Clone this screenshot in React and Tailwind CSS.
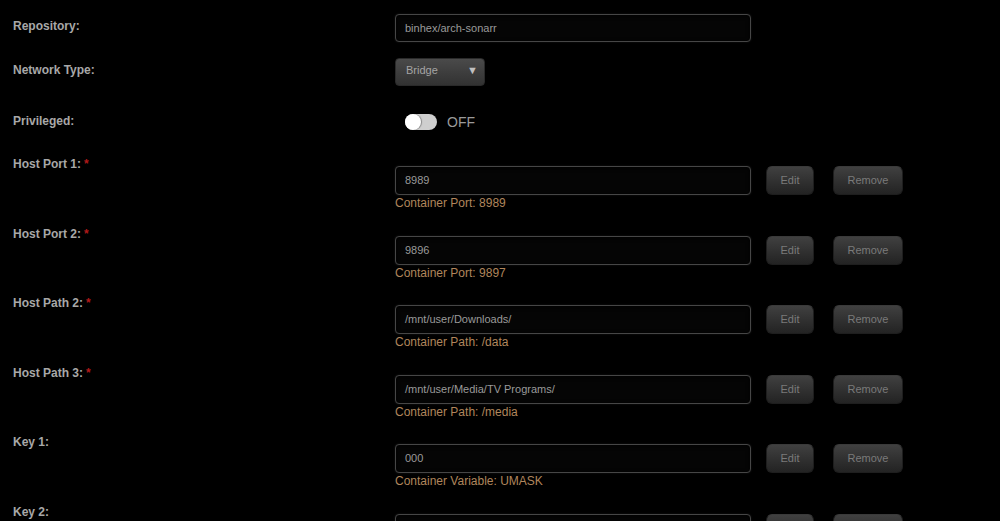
import React from "react";

const font = { fontFamily: '"Liberation Sans", Arial, sans-serif' };

function Label({ children, required }) {
  return (
    <div className="w-[382px] shrink-0 text-[12px] font-bold leading-[16px] text-[#a8a8a8]">
      {children}
      {required && <span className="ml-[3px] text-[#b11a1a]">*</span>}
    </div>
  );
}

function TextBox({ value }) {
  return (
    <div className="flex h-[29px] w-[356px] items-center rounded-[4px] border border-[#464646] bg-[#050505] pl-[9px] text-[11px] text-[#9a9a9a] shadow-[inset_0_1px_4px_rgba(0,0,0,0.9),0_0_2px_rgba(255,255,255,0.1)]">
      {value}
    </div>
  );
}

function Btn({ children, w }) {
  return (
    <button
      className={`${w} flex h-[29px] items-center justify-center rounded-[6px] border border-[#1e1e1e] border-t-[#3a3a3a] bg-gradient-to-b from-[#404040] to-[#232323] text-[11px] leading-none text-[#7a7a7a] shadow-[0_1px_2px_rgba(0,0,0,0.8)]`}
      style={font}
    >
      {children}
    </button>
  );
}

function MappingRow({ label, value, note, h }) {
  return (
    <div className={`flex ${h}`}>
      <Label required={label.required}>{label.text}</Label>
      <div className="flex flex-col pt-[10px]">
        <div className="flex items-center">
          <TextBox value={value} />
          <div className="ml-[15px]">
            <Btn w="w-[48px]">Edit</Btn>
          </div>
          <div className="ml-[19px]">
            <Btn w="w-[70px]">Remove</Btn>
          </div>
        </div>
        <div className="text-[12px] leading-[16px] text-[#b0865c]">{note}</div>
      </div>
    </div>
  );
}

export default function App() {
  const rows = [
    { label: { text: "Host Port 1:", required: true }, value: "8989", note: "Container Port: 8989", h: "h-[70px]" },
    { label: { text: "Host Port 2:", required: true }, value: "9896", note: "Container Port: 9897", h: "h-[69px]" },
    { label: { text: "Host Path 2:", required: true }, value: "/mnt/user/Downloads/", note: "Container Path: /data", h: "h-[70px]" },
    { label: { text: "Host Path 3:", required: true }, value: "/mnt/user/Media/TV Programs/", note: "Container Path: /media", h: "h-[69px]" },
    { label: { text: "Key 1:" }, value: "000", note: "Container Variable: UMASK", h: "h-[70px]" },
    { label: { text: "Key 2:" }, value: "", note: "", h: "h-[70px]" },
  ];

  return (
    <div className="h-[521px] w-[1000px] overflow-hidden bg-black pl-[13px] pt-[14px]" style={font}>
      {/* Repository */}
      <div className="flex">
        <div className="w-[382px] shrink-0 text-[12px] font-bold leading-[24px] text-[#a8a8a8]">Repository:</div>
        <div className="flex h-[28px] w-[356px] items-center rounded-[4px] border border-[#464646] bg-[#050505] pl-[9px] text-[11px] text-[#9a9a9a] shadow-[inset_0_1px_4px_rgba(0,0,0,0.9),0_0_2px_rgba(255,255,255,0.1)]">
          binhex/arch-sonarr
        </div>
      </div>

      {/* Network type */}
      <div className="mt-[16px] flex">
        <div className="w-[382px] shrink-0 text-[12px] font-bold leading-[24px] text-[#a8a8a8]">Network Type:</div>
        <div className="flex h-[28px] w-[90px] items-center justify-between rounded-[4px] border border-[#2a2a2a] bg-gradient-to-b from-[#4a4a4a] to-[#323232] pb-[3px] pl-[10px] pr-[6px] text-[11px] text-[#a5a5a5] shadow-[0_1px_2px_rgba(0,0,0,0.8)]">
          <span>Bridge</span>
          <span className="text-[11px] text-[#c0c0c0]">▼</span>
        </div>
      </div>

      {/* Privileged */}
      <div className="mt-[20px] flex h-[32px]">
        <div className="w-[382px] shrink-0 text-[12px] font-bold leading-[30px] text-[#a8a8a8]">Privileged:</div>
        <div className="flex items-center pl-[10px]">
          <div className="relative h-[16px] w-[32px] rounded-full bg-[#cfcfcf]">
            <div className="absolute left-0 top-0 h-[16px] w-[16px] rounded-full bg-white shadow-[1px_0_1px_rgba(0,0,0,0.35)]" />
          </div>
          <span className="ml-[10px] text-[14px] text-[#9a9a9a]">OFF</span>
        </div>
      </div>

      {/* Port / path / variable mappings */}
      <div className="mt-[18px] flex flex-col">
        {rows.map((r, i) => (
          <MappingRow key={i} {...r} />
        ))}
      </div>
    </div>
  );
}
